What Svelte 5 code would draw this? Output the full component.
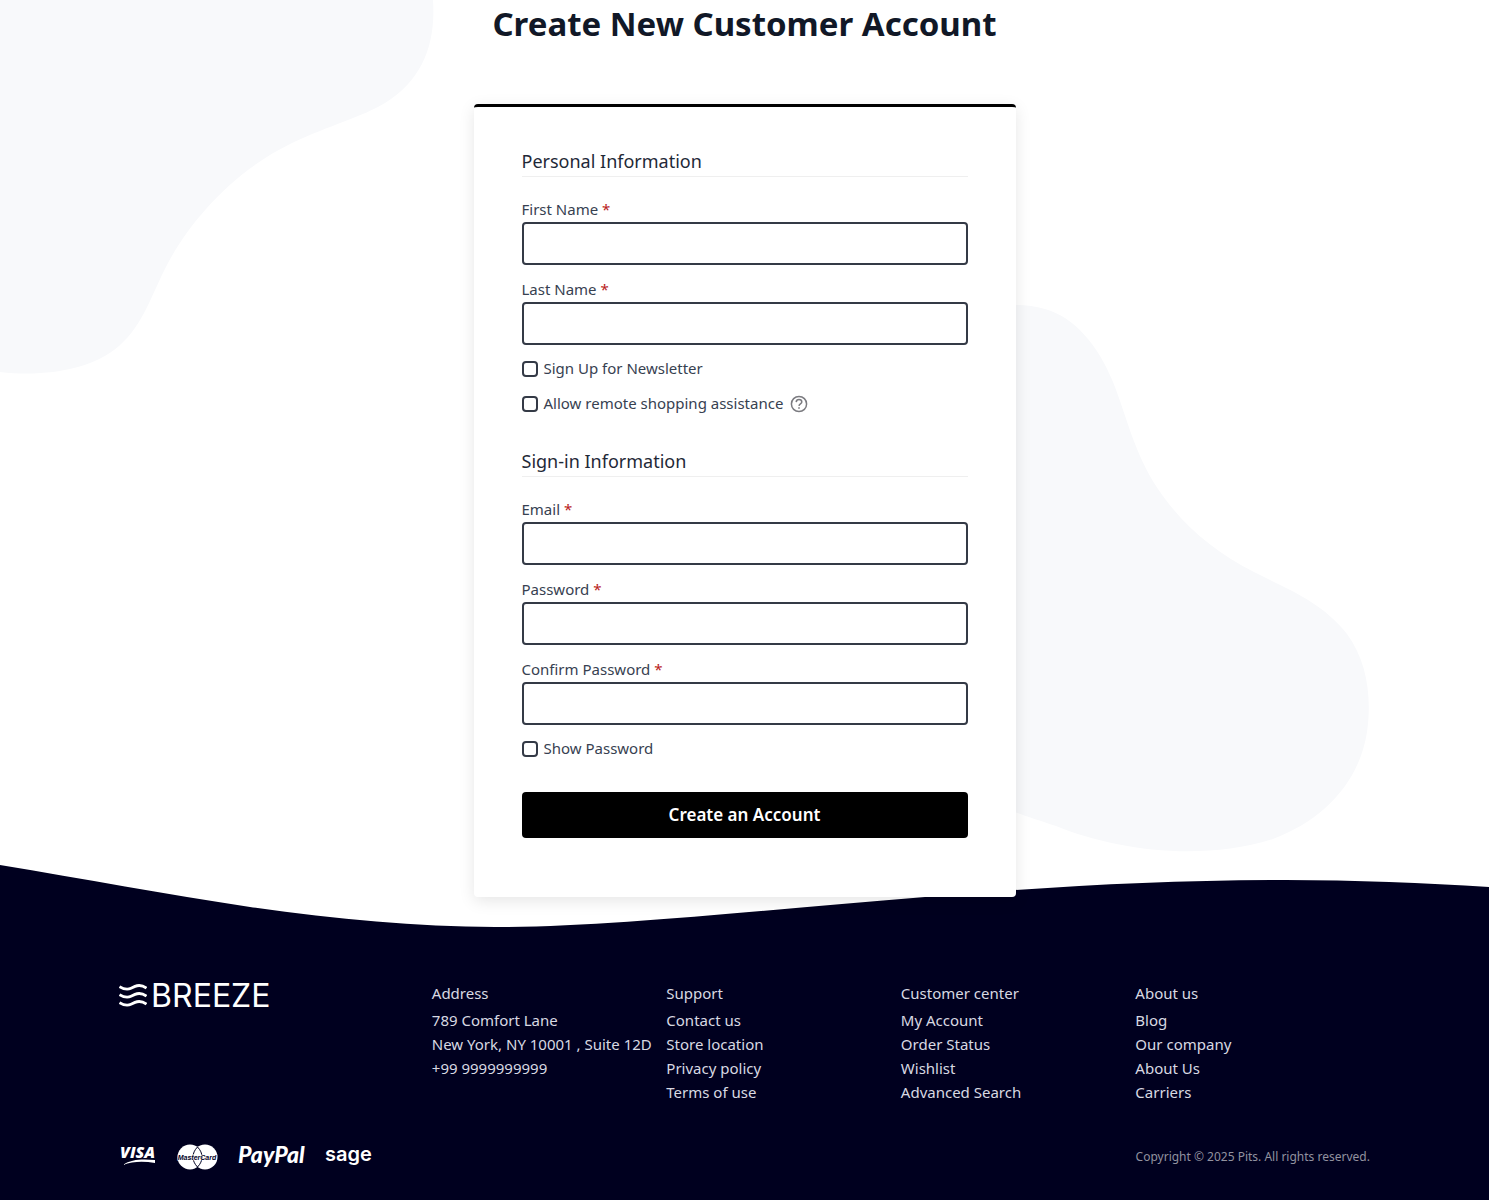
<script lang="ts">
	const columns = [
		{ title: 'Support', links: ['Contact us', 'Store location', 'Privacy policy', 'Terms of use'] },
		{
			title: 'Customer center',
			links: ['My Account', 'Order Status', 'Wishlist', 'Advanced Search']
		},
		{ title: 'About us', links: ['Blog', 'Our company', 'About Us', 'Carriers'] }
	];

	let showPassword = $state(false);
	let passwordType = $derived(showPassword ? 'text' : 'password');
</script>

<div class="page">
	<svg class="blob left" viewBox="0 0 436 376" aria-hidden="true">
		<path
			d="M0 0H433C436 45 422 80 385 103C362 117 330 125 292 143C232 172 190 222 168 263C151 295 144 324 119 346C91 370 45 377 0 372Z"
		/>
	</svg>
	<svg class="blob right" viewBox="0 0 400 552" aria-hidden="true">
		<path
			d="M0 15C25 2 50 0 75 7C104 15 128 43 143 80C157 115 164 151 188 187C213 224 245 250 284 270C319 288 352 300 377 332C397 359 402 395 397 430C389 481 353 518 303 537C230 560 145 548 86 524C50 512 30 506 0 490Z"
		/>
	</svg>

	<main>
		<h1>Create New Customer Account</h1>

		<form class="card" onsubmit={(e) => e.preventDefault()}>
			<fieldset>
				<legend>Personal Information</legend>
				<div class="field">
					<label for="firstname">First Name <em>*</em></label>
					<input id="firstname" type="text" required />
				</div>
				<div class="field">
					<label for="lastname">Last Name <em>*</em></label>
					<input id="lastname" type="text" required />
				</div>
				<div class="choice">
					<input id="newsletter" type="checkbox" />
					<label for="newsletter">Sign Up for Newsletter</label>
				</div>
				<div class="choice">
					<input id="assistance" type="checkbox" />
					<label for="assistance">Allow remote shopping assistance</label>
					<button class="help" type="button" aria-label="Help">
						<svg viewBox="0 0 18 18" fill="none" stroke="currentColor">
							<circle cx="9" cy="9" r="7.6" stroke-width="1.5" />
							<path
								d="M6.2 7.1C6.3 5.4 7.5 4.5 9 4.5s2.8 1 2.8 2.5C11.8 8.9 9.1 8.9 9 10.9"
								stroke-width="1.5"
							/>
							<path d="M9 12.2v1.6" stroke-width="1.6" />
						</svg>
					</button>
				</div>
			</fieldset>

			<fieldset>
				<legend>Sign-in Information</legend>
				<div class="field">
					<label for="email">Email <em>*</em></label>
					<input id="email" type="email" required />
				</div>
				<div class="field">
					<label for="password">Password <em>*</em></label>
					<input id="password" type={passwordType} required />
				</div>
				<div class="field">
					<label for="confirm">Confirm Password <em>*</em></label>
					<input id="confirm" type={passwordType} required />
				</div>
				<div class="choice">
					<input id="show" type="checkbox" bind:checked={showPassword} />
					<label for="show">Show Password</label>
				</div>
			</fieldset>

			<button class="submit" type="submit">Create an Account</button>
		</form>
	</main>

	<svg class="wave" viewBox="0 0 1489 64" preserveAspectRatio="none" aria-hidden="true">
		<path
			d="M0 0C85 14 165 29 250 42C335 54 415 62 495 62C610 62 760 45 925 32C1045 22 1160 15 1285 15C1355 15 1425 18 1489 22V64H0Z"
		/>
	</svg>

	<footer>
		<div class="columns">
			<a class="logo" href="/" aria-label="Breeze">
				<svg viewBox="0 0 28 24" fill="none" stroke="currentColor" stroke-width="2.8">
					<path d="M.5 2.6C4.5 5 8 6 12 4.2L16 2.4C20 .7 24 1.6 27.5 4.2" />
					<path d="M.5 10.6C4.5 13 8 14 12 12.2L16 10.4C20 8.7 24 9.6 27.5 12.2" />
					<path d="M.5 18.6C4.5 21 8 22 12 20.2L16 18.4C20 16.7 24 17.6 27.5 20.2" />
				</svg>
				<span>BREEZE</span>
			</a>
			<div class="column">
				<h2>Address</h2>
				<address>
					789 Comfort Lane<br />
					New York, NY 10001 , Suite 12D<br />
					+99 9999999999
				</address>
			</div>
			{#each columns as column}
				<div class="column">
					<h2>{column.title}</h2>
					<ul>
						{#each column.links as link}
							<li><a href="/">{link}</a></li>
						{/each}
					</ul>
				</div>
			{/each}
		</div>

		<div class="bottom">
			<div class="payments">
				<svg width="38" height="26" viewBox="0 0 38 26" role="img" aria-label="Visa">
					<text class="visa" x="1" y="14">VISA</text>
					<path d="M4 21C12 15 24 15 36 16V19C25 17 14 17 4 21Z" />
				</svg>
				<svg width="41" height="26" viewBox="0 0 41 26" role="img" aria-label="MasterCard">
					<circle cx="13" cy="13" r="12.5" />
					<circle cx="28" cy="13" r="12.5" />
					<path class="lens" d="M20.5 3C14.5 9 14.5 17 20.5 23C26.5 17 26.5 9 20.5 3Z" />
					<text class="mastercard" x="20" y="16" text-anchor="middle">MasterCard</text>
				</svg>
				<svg width="67" height="26" viewBox="0 0 67 26" role="img" aria-label="PayPal">
					<text class="paypal" x="0" y="19">PayPal</text>
				</svg>
				<svg width="48" height="26" viewBox="0 0 48 26" role="img" aria-label="Sage">
					<text class="sage" x="0" y="17">sage</text>
				</svg>
			</div>
			<small>Copyright © 2025 Pits. All rights reserved.</small>
		</div>
	</footer>
</div>

<style>
	:global(body) {
		margin: 0;
		background: #fff;
	}

	.page {
		position: relative;
		overflow: hidden;
		font-family: 'Noto Sans', 'Open Sans', sans-serif;
		font-size: 15px;
		line-height: 24px;
		color: #374151;
	}

	.blob {
		position: absolute;
		fill: #f8f9fb;
	}

	.left {
		top: 0;
		left: 0;
		width: 436px;
	}

	.right {
		top: 302px;
		right: 8%;
		width: 400px;
	}

	main {
		position: relative;
		z-index: 1;
		display: flex;
		flex-direction: column;
		align-items: center;
	}

	h1 {
		margin: 0 0 56px;
		font-size: 33px;
		line-height: 48px;
		color: #111827;
	}

	.card {
		box-sizing: border-box;
		width: 100%;
		max-width: 542px;
		padding: 40px 48px 59px;
		border-top: 3px solid #000;
		border-radius: 4px;
		background: #fff;
		box-shadow: 0 4px 16px rgba(0, 0, 0, 0.1);
	}

	fieldset {
		margin: 0 0 20px;
		padding: 0;
		border: 0;
		min-width: 0;
	}

	legend {
		box-sizing: border-box;
		width: 100%;
		margin-bottom: 20px;
		padding: 0;
		border-bottom: 1px solid #efefef;
		font-size: 18px;
		line-height: 29px;
		color: #1f2937;
	}

	.field {
		display: flex;
		flex-direction: column;
		margin-bottom: 12px;
	}

	.field label {
		line-height: 25px;
	}

	em {
		font-style: normal;
		color: #b91c1c;
	}

	.field input {
		box-sizing: border-box;
		width: 100%;
		height: 43px;
		padding: 0 12px;
		border: 2px solid #343a46;
		border-radius: 4px;
		background: #fff;
		font: inherit;
	}

	.choice {
		display: flex;
		align-items: center;
		margin-bottom: 12px;
		line-height: 23px;
	}

	.choice input {
		appearance: none;
		box-sizing: border-box;
		width: 16px;
		height: 16px;
		margin: 0 6px 0 0;
		border: 2px solid #343a46;
		border-radius: 4px;
		background: #fff;
	}

	.choice input:checked {
		background: #343a46;
	}

	.help {
		width: 18px;
		height: 18px;
		margin-left: 7px;
		padding: 0;
		border: 0;
		background: none;
		color: #7b7b80;
	}

	.help svg {
		display: block;
	}

	.submit {
		width: 100%;
		height: 46px;
		border: 0;
		border-radius: 4px;
		background: #000;
		color: #fff;
		font: 600 17px/24px 'Noto Sans', 'Open Sans', sans-serif;
		cursor: pointer;
	}

	.wave {
		display: block;
		width: 100%;
		height: 64px;
		margin-top: -32px;
		fill: #00001f;
	}

	footer {
		padding: 52px 8% 30px;
		background: #00001f;
		color: #d8d9e2;
	}

	.columns {
		display: grid;
		grid-template-columns: 4fr 3fr 3fr 3fr 3fr;
	}

	.column {
		min-width: 0;
		white-space: nowrap;
	}

	.logo {
		display: flex;
		align-items: center;
		align-self: start;
		gap: 4px;
		height: 30px;
		color: #fff;
		text-decoration: none;
	}

	.logo svg {
		width: 28px;
		height: 24px;
	}

	.logo span {
		font-family: Inter, Roboto, sans-serif;
		font-size: 32px;
		font-weight: 400;
	}

	h2 {
		margin: 0 0 3px;
		font-size: 15px;
		font-weight: 400;
		line-height: 24px;
	}

	address {
		font-style: normal;
	}

	ul {
		margin: 0;
		padding: 0;
		list-style: none;
	}

	li a {
		color: inherit;
		text-decoration: none;
	}

	.bottom {
		display: flex;
		align-items: center;
		justify-content: space-between;
		margin-top: 40px;
	}

	.payments {
		display: flex;
		gap: 20px;
		fill: #fff;
	}

	.payments svg {
		overflow: visible;
	}

	.visa {
		font: italic 800 16px 'Open Sans', sans-serif;
	}

	.lens {
		fill: none;
		stroke: #00001f;
	}

	.mastercard {
		font: italic 700 7px 'Liberation Sans', sans-serif;
		fill: #00001f;
		stroke: #fff;
		stroke-width: 1px;
		paint-order: stroke;
	}

	.paypal {
		font: italic 900 23px Lato, sans-serif;
	}

	.sage {
		font: 600 20px Inter, 'Liberation Sans', sans-serif;
	}

	small {
		font-size: 12px;
		color: #92929f;
	}
</style>
